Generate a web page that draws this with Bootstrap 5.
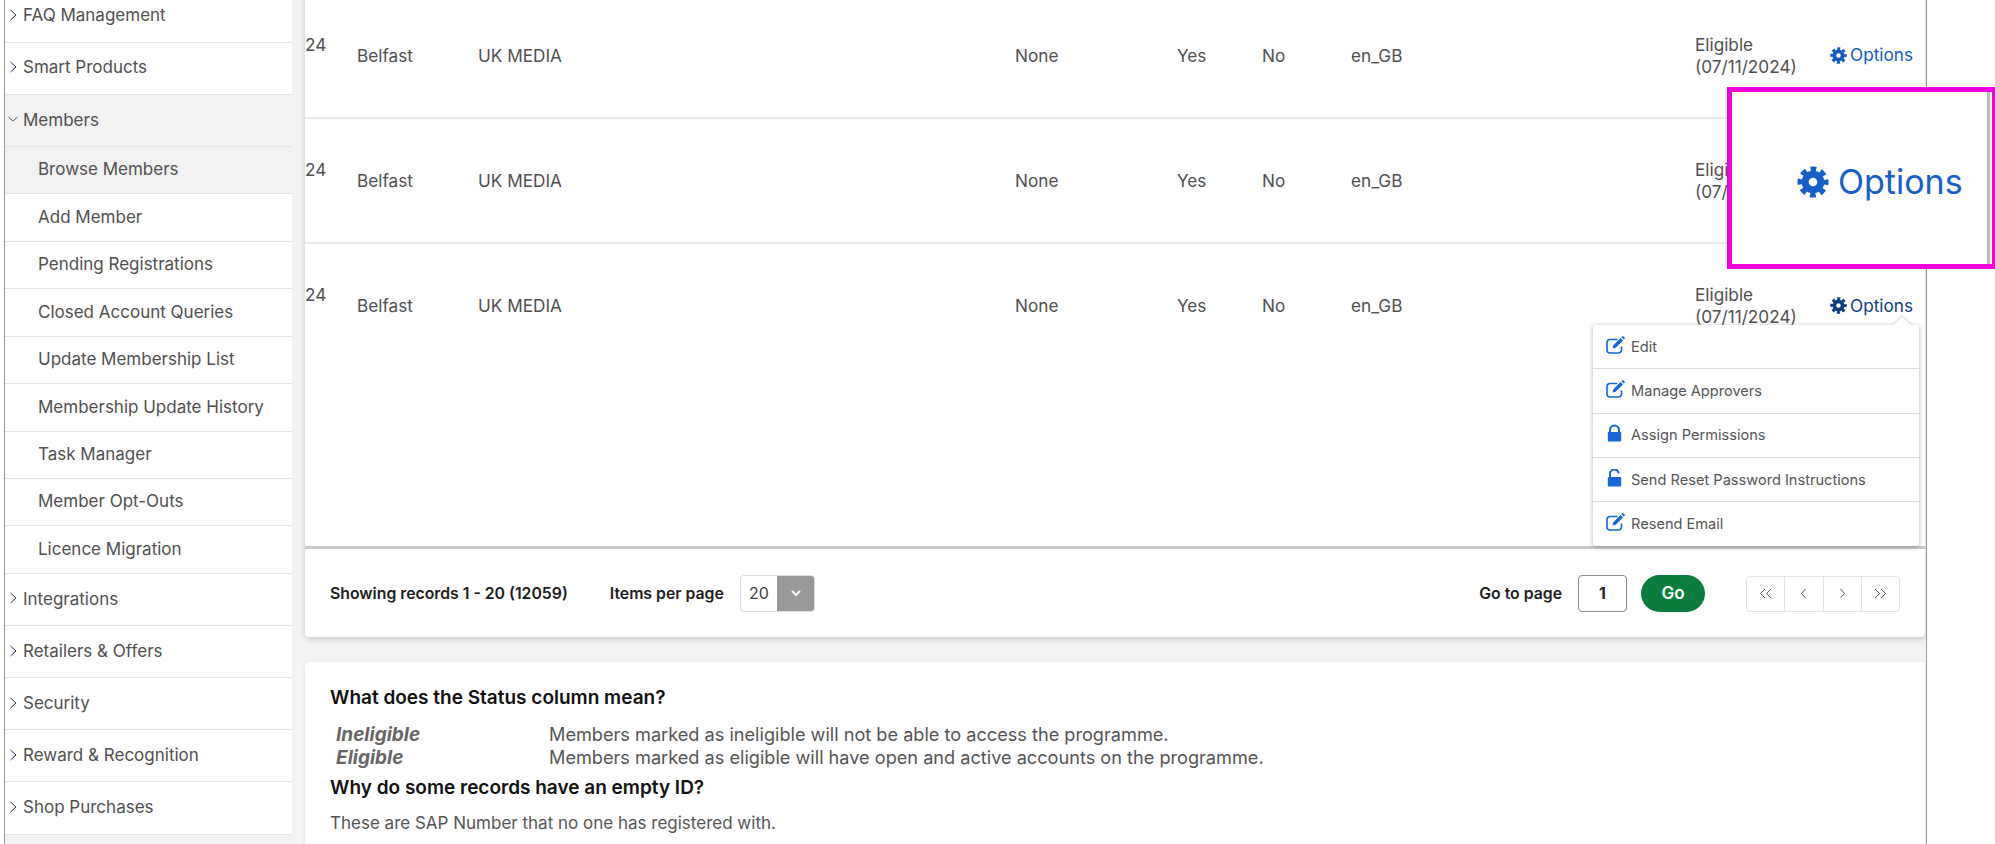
<!DOCTYPE html>
<html lang="en">
<head>
<meta charset="utf-8">
<title>Members</title>
<link rel="stylesheet" href="https://cdn.jsdelivr.net/npm/bootstrap@5.3.0/dist/css/bootstrap.min.css">
<style>
html,body{height:844px;overflow:hidden;background:#fff}
body{font-family:Inter,"Liberation Sans",sans-serif;font-size:16px;color:#505050}
.frame{width:1923px;height:844px;margin-left:4px;border-left:1px solid #999;border-right:1px solid #999;background:#f3f3f3;overflow:hidden;position:relative}
.side{width:287px;margin-top:-9.500px;background:#fff;flex:none;font-size:17px}
.side-top,.side-sub{display:flex;align-items:center;border-bottom:1px solid #dfe4ec;color:#505050;text-decoration:none}
.side-top{height:52.15px;padding-left:3px}
.side-top svg{width:10px;height:14px;margin-right:5px;flex:none;margin-top:-2px}
.side-sub{height:47.45px;padding-left:33px}
.side-on{background:#f2f2f2}
.content{margin-left:13px;width:1620px;flex:none}
.panel-one{background:#fff;height:643px;margin-top:-6px;box-shadow:0 2px 6px rgba(0,0,0,.18);border-radius:0 0 4px 4px}
.mtable{table-layout:fixed;width:1620px;margin:0;font-size:17.2px;--bs-table-color:#505050}
.mtable td{padding:0;vertical-align:middle;line-height:22px;border-bottom:2px solid #e9e9e9;height:125px;white-space:nowrap}
.mtable tr:first-child td{height:124px}
.mtable tr.last-row td{border-bottom:0}
.mtable tr.filler td{height:179px;border-bottom:3px solid #ccc}
.w1{width:52px}.w2{width:121px}.w3{width:537px}.w4{width:162px}.w5{width:85px}.w6{width:89px}.w7{width:344px}.w8{width:135px}.w9{width:95px}
.opt{color:#0d5bc6;text-decoration:none;display:inline-flex;align-items:center;gap:3px;margin-top:2px}
.opt svg{width:17px;height:17px}
.opt-on{color:#0b3d82}
.opt-cell{position:relative}
.opt-menu{display:block;position:absolute;top:81px;left:-237px;width:326px;padding:0;margin:0;border:0;border-radius:4px;background:#fff;box-shadow:0 1px 5px rgba(0,0,0,.3);z-index:5;line-height:normal}
.opt-menu::before{content:"";position:absolute;top:-6px;right:11px;width:12px;height:12px;background:#fff;transform:rotate(45deg);box-shadow:-1px -1px 2px rgba(0,0,0,.14)}
.opt-menu li{position:relative;border-bottom:1px solid #ddd;height:44.3px}
.opt-menu li:last-child{border-bottom:0}
.opt-menu a{display:flex;align-items:center;height:100%;padding:0 0 0 13px;font-size:14.6px;color:#555;background:transparent}
.opt-menu svg{width:20px;height:19px;margin-right:5px;color:#1668d8;flex:none;margin-top:-3px}
.pager-bar{height:90px;font-size:15.8px;font-weight:600;color:#1d1d1d;padding:0 25px}
.sel-wrap{width:75px;height:37px;border:1px solid #ddd;border-radius:4px;overflow:hidden;background:#fff}
.sel-val{font-weight:400;font-size:16px;color:#444;width:37px;text-align:center;line-height:35px}
.sel-btn{width:37px;background:#999;display:flex;align-items:center;justify-content:center}
.sel-btn svg{width:12px;height:9px}
.page-inp{width:49px;height:37px;border:1px solid #8c8c8c;border-radius:4px;text-align:center;line-height:35px;font-weight:700;color:#222}
.go-btn{width:64px;height:37px;padding:0;margin-left:14px;background:#0a7d3c;border:0;border-radius:19px;font-weight:600;font-size:17px;color:#fff;line-height:35px}
.go-btn:hover{background:#0a7d3c;color:#fff}
.pg-box{width:154px;height:36px;margin:0 0 0 41px;--bs-pagination-border-color:#e3e3e3;--bs-pagination-border-radius:4px}
.pg-box .page-link{width:39.250px;height:36px;padding:0;display:flex;align-items:center;justify-content:center;color:#555;background:#fff}
.pg-box svg{width:13px;height:11px}
.items-lbl{margin-left:42px}
.panel-two{background:#fff;margin-top:25px;border-radius:4px 4px 0 0;padding:24px 25px 0;height:200px;box-shadow:0 1px 4px rgba(0,0,0,.08)}
.help-q{font-size:19px;font-weight:600;color:#111;line-height:24px;margin:0}
.help-row{display:flex;line-height:23px;color:#555;font-size:18.15px}
.help-term{width:219px;padding-left:6px;font-weight:700;font-style:italic;font-size:19px;color:#666;flex:none}
.help-list{margin:13px 0 7px}
.help-p{margin:11px 0 0;line-height:24px;color:#555;font-size:17px}
.zoom-note{position:fixed;left:1727px;top:87px;width:268px;height:182px;border:5px solid #f000d8;border-right-width:3px;background:#fff;z-index:10;display:flex;align-items:center}
.zoom-note .opt{margin-left:65px;font-size:34px;gap:9px;margin-top:7px;color:#1560c8}
.zoom-note .opt svg{width:32px;height:32px}
.zoom-edge{position:absolute;right:2px;top:0;bottom:0;width:3px;background:#bbb}
</style>
</head>
<body>
<svg width="0" height="0" class="d-block" aria-hidden="true">
<symbol id="i-gear" viewBox="0 0 20 20"><circle cx="10" cy="10" r="4.900" fill="none" stroke="currentColor" stroke-width="4.400"/><circle cx="10" cy="10" r="8" fill="none" stroke="currentColor" stroke-width="3.400" stroke-dasharray="3.500 2.783" stroke-dashoffset="1.750"/></symbol>
<symbol id="i-right" viewBox="0 0 10 14"><path d="M2.500 2 8 7l-5.500 5" fill="none" stroke="#2a3550" stroke-width="1"/></symbol>
<symbol id="i-down" viewBox="0 0 10 14"><path d="M.500 5 5 9l4.500-4" fill="none" stroke="#555" stroke-width="1"/></symbol>
<symbol id="i-edit" viewBox="0 0 20 19"><path d="M15.500 10.500V14a3 3 0 0 1-3 3H4a3 3 0 0 1-3-3V6.500a3 3 0 0 1 3-3h7.500" fill="none" stroke="currentColor" stroke-width="1.600"/><path d="M6.500 12.500l.8-3.200 7.300-7.300 2.400 2.400-7.300 7.300zM15.400 1.200l.8-.8a1 1 0 0 1 1.300 0l1.100 1.100a1 1 0 0 1 0 1.300l-.8.800z" fill="currentColor"/></symbol>
<symbol id="i-lock" viewBox="0 0 20 19"><path d="M4 8.500V6a4.500 4.500 0 0 1 9 0v2.500" fill="none" stroke="currentColor" stroke-width="2"/><rect x="1.800" y="8" width="13.400" height="9.500" rx="1" fill="currentColor"/></symbol>
<symbol id="i-open" viewBox="0 0 20 19"><path d="M4 8.500V5a4.300 4.300 0 0 1 8.600-.5" fill="none" stroke="currentColor" stroke-width="2"/><rect x="1.800" y="8" width="13.400" height="9.500" rx="1" fill="currentColor"/></symbol>
<symbol id="i-l1" viewBox="0 0 13 11"><path d="M8.500 1 4.500 5.500l4 4.500" fill="none" stroke="currentColor"/></symbol>
<symbol id="i-r1" viewBox="0 0 13 11"><path d="M4.500 1l4 4.500-4 4.500" fill="none" stroke="currentColor"/></symbol>
<symbol id="i-l2" viewBox="0 0 13 11"><path d="M6 1 1.500 5.500 6 10M12 1 7.500 5.500 12 10" fill="none" stroke="currentColor"/></symbol>
<symbol id="i-r2" viewBox="0 0 13 11"><path d="M1 1l4.500 4.500L1 10M7 1l4.500 4.500L7 10" fill="none" stroke="currentColor"/></symbol>
</svg>

<div class="frame d-flex align-items-start">
  <nav class="side">
    <a class="side-top" href="#"><svg><use href="#i-right"/></svg>FAQ Management</a>
    <a class="side-top" href="#"><svg><use href="#i-right"/></svg>Smart Products</a>
    <a class="side-top side-on" href="#"><svg><use href="#i-down"/></svg>Members</a>
    <a class="side-sub side-on" href="#">Browse Members</a>
    <a class="side-sub" href="#">Add Member</a>
    <a class="side-sub" href="#">Pending Registrations</a>
    <a class="side-sub" href="#">Closed Account Queries</a>
    <a class="side-sub" href="#">Update Membership List</a>
    <a class="side-sub" href="#">Membership Update History</a>
    <a class="side-sub" href="#">Task Manager</a>
    <a class="side-sub" href="#">Member Opt-Outs</a>
    <a class="side-sub" href="#">Licence Migration</a>
    <a class="side-top" href="#"><svg><use href="#i-right"/></svg>Integrations</a>
    <a class="side-top" href="#"><svg><use href="#i-right"/></svg>Retailers &amp; Offers</a>
    <a class="side-top" href="#"><svg><use href="#i-right"/></svg>Security</a>
    <a class="side-top" href="#"><svg><use href="#i-right"/></svg>Reward &amp; Recognition</a>
    <a class="side-top" href="#"><svg><use href="#i-right"/></svg>Shop Purchases</a>
  </nav>

  <main class="content">
    <div class="panel-one">
      <table class="table mtable">
        <colgroup><col class="w1"><col class="w2"><col class="w3"><col class="w4"><col class="w5"><col class="w6"><col class="w7"><col class="w8"><col class="w9"></colgroup>
        <tbody>
          <tr><td>24<br>&nbsp;</td><td>Belfast</td><td>UK MEDIA</td><td>None</td><td>Yes</td><td>No</td><td>en_GB</td><td>Eligible<br>(07/11/2024)</td><td><a class="opt" href="#"><svg><use href="#i-gear"/></svg>Options</a></td></tr>
          <tr><td>24<br>&nbsp;</td><td>Belfast</td><td>UK MEDIA</td><td>None</td><td>Yes</td><td>No</td><td>en_GB</td><td>Eligible<br>(07/11/2024)</td><td><a class="opt" href="#"><svg><use href="#i-gear"/></svg>Options</a></td></tr>
          <tr class="last-row"><td>24<br>&nbsp;</td><td>Belfast</td><td>UK MEDIA</td><td>None</td><td>Yes</td><td>No</td><td>en_GB</td><td>Eligible<br>(07/11/2024)</td>
            <td class="opt-cell"><a class="opt opt-on" href="#"><svg><use href="#i-gear"/></svg>Options</a>
              <ul class="dropdown-menu opt-menu list-unstyled">
                <li><a class="dropdown-item" href="#"><svg><use href="#i-edit"/></svg>Edit</a></li>
                <li><a class="dropdown-item" href="#"><svg><use href="#i-edit"/></svg>Manage Approvers</a></li>
                <li><a class="dropdown-item" href="#"><svg><use href="#i-lock"/></svg>Assign Permissions</a></li>
                <li><a class="dropdown-item" href="#"><svg><use href="#i-open"/></svg>Send Reset Password Instructions</a></li>
                <li><a class="dropdown-item" href="#"><svg><use href="#i-edit"/></svg>Resend Email</a></li>
              </ul>
            </td></tr>
          <tr class="filler"><td colspan="9"></td></tr>
        </tbody>
      </table>
      <div class="pager-bar d-flex align-items-center">
        <span>Showing records 1 - 20 (12059)</span>
        <span class="items-lbl">Items per page</span>
        <div class="sel-wrap d-flex ms-3">
          <span class="sel-val">20</span>
          <span class="sel-btn"><svg viewBox="0 0 12 9"><path d="M2 2 6 6l4-4" fill="none" stroke="#fff" stroke-width="2"/></svg></span>
        </div>
        <span class="ms-auto">Go to page</span>
        <span class="page-inp ms-3">1</span>
        <button class="btn go-btn" type="button">Go</button>
        <ul class="pagination pg-box">
          <li class="page-item"><a class="page-link" href="#"><svg><use href="#i-l2"/></svg></a></li>
          <li class="page-item"><a class="page-link" href="#"><svg><use href="#i-l1"/></svg></a></li>
          <li class="page-item"><a class="page-link" href="#"><svg><use href="#i-r1"/></svg></a></li>
          <li class="page-item"><a class="page-link" href="#"><svg><use href="#i-r2"/></svg></a></li>
        </ul>
      </div>
    </div>
    <div class="panel-two">
      <h6 class="help-q">What does the Status column mean?</h6>
      <div class="help-list">
        <div class="help-row"><span class="help-term">Ineligible</span><span>Members marked as ineligible will not be able to access the programme.</span></div>
        <div class="help-row"><span class="help-term">Eligible</span><span>Members marked as eligible will have open and active accounts on the programme.</span></div>
      </div>
      <h6 class="help-q">Why do some records have an empty ID?</h6>
      <p class="help-p">These are SAP Number that no one has registered with.</p>
    </div>
  </main>
</div>

<div class="zoom-note">
  <a class="opt" href="#"><svg><use href="#i-gear"/></svg>Options</a>
  <span class="zoom-edge"></span>
</div>
</body>
</html>
